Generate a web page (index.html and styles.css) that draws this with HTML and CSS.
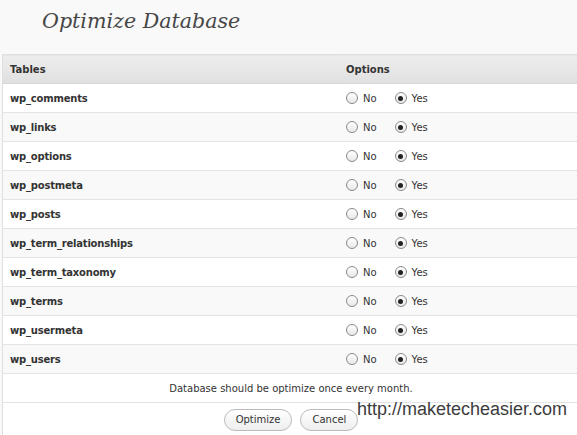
FILE: index.html
```html
<!DOCTYPE html>
<html>
<head>
<meta charset="utf-8">
<link rel="stylesheet" href="styles.css">
</head>
<body>
<div class="page">
  <h2 class="title">Optimize Database</h2>
  <table class="db">
    <thead>
      <tr><th class="col-name">Tables</th><th>Options</th></tr>
    </thead>
    <tbody>
      <tr><td class="name">wp_comments</td><td><span class="opt"><span class="radio"></span>No</span><span class="opt"><span class="radio on"></span>Yes</span></td></tr>
      <tr class="alt"><td class="name">wp_links</td><td><span class="opt"><span class="radio"></span>No</span><span class="opt"><span class="radio on"></span>Yes</span></td></tr>
      <tr><td class="name">wp_options</td><td><span class="opt"><span class="radio"></span>No</span><span class="opt"><span class="radio on"></span>Yes</span></td></tr>
      <tr class="alt"><td class="name">wp_postmeta</td><td><span class="opt"><span class="radio"></span>No</span><span class="opt"><span class="radio on"></span>Yes</span></td></tr>
      <tr><td class="name">wp_posts</td><td><span class="opt"><span class="radio"></span>No</span><span class="opt"><span class="radio on"></span>Yes</span></td></tr>
      <tr class="alt"><td class="name">wp_term_relationships</td><td><span class="opt"><span class="radio"></span>No</span><span class="opt"><span class="radio on"></span>Yes</span></td></tr>
      <tr><td class="name">wp_term_taxonomy</td><td><span class="opt"><span class="radio"></span>No</span><span class="opt"><span class="radio on"></span>Yes</span></td></tr>
      <tr class="alt"><td class="name">wp_terms</td><td><span class="opt"><span class="radio"></span>No</span><span class="opt"><span class="radio on"></span>Yes</span></td></tr>
      <tr><td class="name">wp_usermeta</td><td><span class="opt"><span class="radio"></span>No</span><span class="opt"><span class="radio on"></span>Yes</span></td></tr>
      <tr class="alt"><td class="name">wp_users</td><td><span class="opt"><span class="radio"></span>No</span><span class="opt"><span class="radio on"></span>Yes</span></td></tr>
      <tr class="note"><td colspan="2">Database should be optimize once every month.</td></tr>
      <tr class="actions"><td colspan="2"><span class="btn">Optimize</span><span class="btn">Cancel</span></td></tr>
    </tbody>
  </table>
  <div class="watermark">http://maketecheasier.com</div>
</div>
</body>
</html>
```
FILE: styles.css
```css
html, body {
  margin: 0;
  padding: 0;
  background: #f9f9f9;
  overflow: hidden;
}
.page {
  position: relative;
  width: 577px;
  height: 435px;
  overflow: hidden;
  font-family: "DejaVu Sans", "Liberation Sans", sans-serif;
  color: #333;
}
.title {
  margin: 0;
  padding: 6px 0 0 42px;
  height: 54px;
  box-sizing: border-box;
  font-family: "DejaVu Serif", serif;
  font-style: italic;
  font-weight: normal;
  font-size: 20.6px;
  line-height: 30px;
  color: #464646;
}
.db {
  margin-left: 2px;
  width: 600px;
  border-collapse: collapse;
  background: #fff;
  border-top: 1px solid #dfdfdf;
  border-left: 1px solid #dfdfdf;
  font-size: 10px;
}
.db th {
  height: 28px;
  padding: 0 7px;
  text-align: left;
  font-weight: bold;
  color: #333;
  background: linear-gradient(#ededed, #e0e0e0);
  border-bottom: 1px solid #d8d8d8;
}
.db .col-name { width: 322px; }
.db td {
  height: 28px;
  padding: 0 7px;
  border-bottom: 1px solid #e3e3e3;
  vertical-align: middle;
}
.db td.name { font-weight: bold; letter-spacing: -0.2px; }
.db tr.alt td { background: #f9f9f9; }
.opt {
  display: inline-flex;
  align-items: center;
  gap: 5px;
  margin-right: 18px;
  vertical-align: middle;
}
.radio {
  display: inline-block;
  width: 10px;
  height: 10px;
  border: 1px solid #8a8a8a;
  border-radius: 50%;
  background: linear-gradient(#ffffff, #e8e8e8);
  position: relative;
}
.radio.on::after {
  content: "";
  position: absolute;
  left: 2.5px;
  top: 2.5px;
  width: 5px;
  height: 5px;
  border-radius: 50%;
  background: #222;
}
.note td {
  text-align: center;
  background: #fff;
  padding-right: 30px;
}
.actions td {
  height: 34px;
  text-align: center;
  border-bottom: none;
  padding-right: 30px;
}
.btn {
  display: inline-block;
  height: 20px;
  line-height: 20px;
  padding: 0 11px;
  margin: 0 4px;
  border: 1px solid #bbb;
  border-radius: 11px;
  background: linear-gradient(#ffffff, #eeeeee);
  font-size: 10px;
  color: #333;
}
.watermark {
  position: absolute;
  left: 357px;
  top: 399px;
  font-family: "Liberation Sans", Arial, sans-serif;
  font-size: 18px;
  color: #3c3c3c;
}
```
